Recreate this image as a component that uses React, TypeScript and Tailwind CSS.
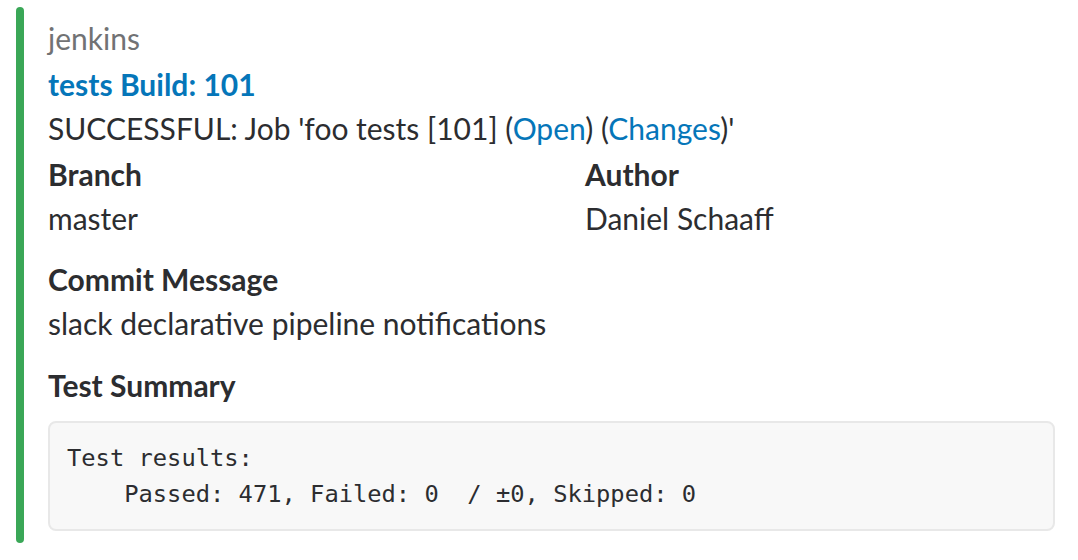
export default function App() {
  return (
    <div className="w-[1078px] h-[560px] bg-white flex items-start pl-4 pt-[7px]" style={{ fontFamily: 'Lato, "Noto Sans", sans-serif' }}>
      <div className="w-2 h-[536px] rounded-full bg-[#3aa757] shrink-0" />
      <div className="ml-6 w-[1007px] pt-[9px] text-[30px] leading-[44px] text-[#2c2d30]">
        <div className="text-[#717274] mb-[2px]">jenkins</div>
        <div className="font-bold text-[#0576b9]">tests Build: 101</div>
        <div>
          SUCCESSFUL: Job 'foo tests [101] (<span className="text-[#0576b9]">Open</span>) (
          <span className="text-[#0576b9]">Changes</span>)'
        </div>
        <div className="grid grid-cols-[537px_1fr] mt-[2px]">
          <div>
            <div className="font-bold">Branch</div>
            <div>master</div>
          </div>
          <div>
            <div className="font-bold">Author</div>
            <div>Daniel Schaaff</div>
          </div>
        </div>
        <div className="mt-[17px]">
          <div className="font-bold">Commit Message</div>
          <div>slack declarative pipeline notifications</div>
        </div>
        <div className="mt-[18px]">
          <div className="font-bold">Test Summary</div>
          <pre
            className="mt-[14px] rounded-lg border-2 border-[#e8e8e8] bg-[#f8f8f8] px-[17px] pt-[17px] pb-[17px] text-[23.75px] leading-[36px] text-[#2c2d30]"
            style={{ fontFamily: '"DejaVu Sans Mono", monospace' }}
          >
{`Test results:
    Passed: 471, Failed: 0  / ±0, Skipped: 0`}
          </pre>
        </div>
      </div>
    </div>
  );
}
